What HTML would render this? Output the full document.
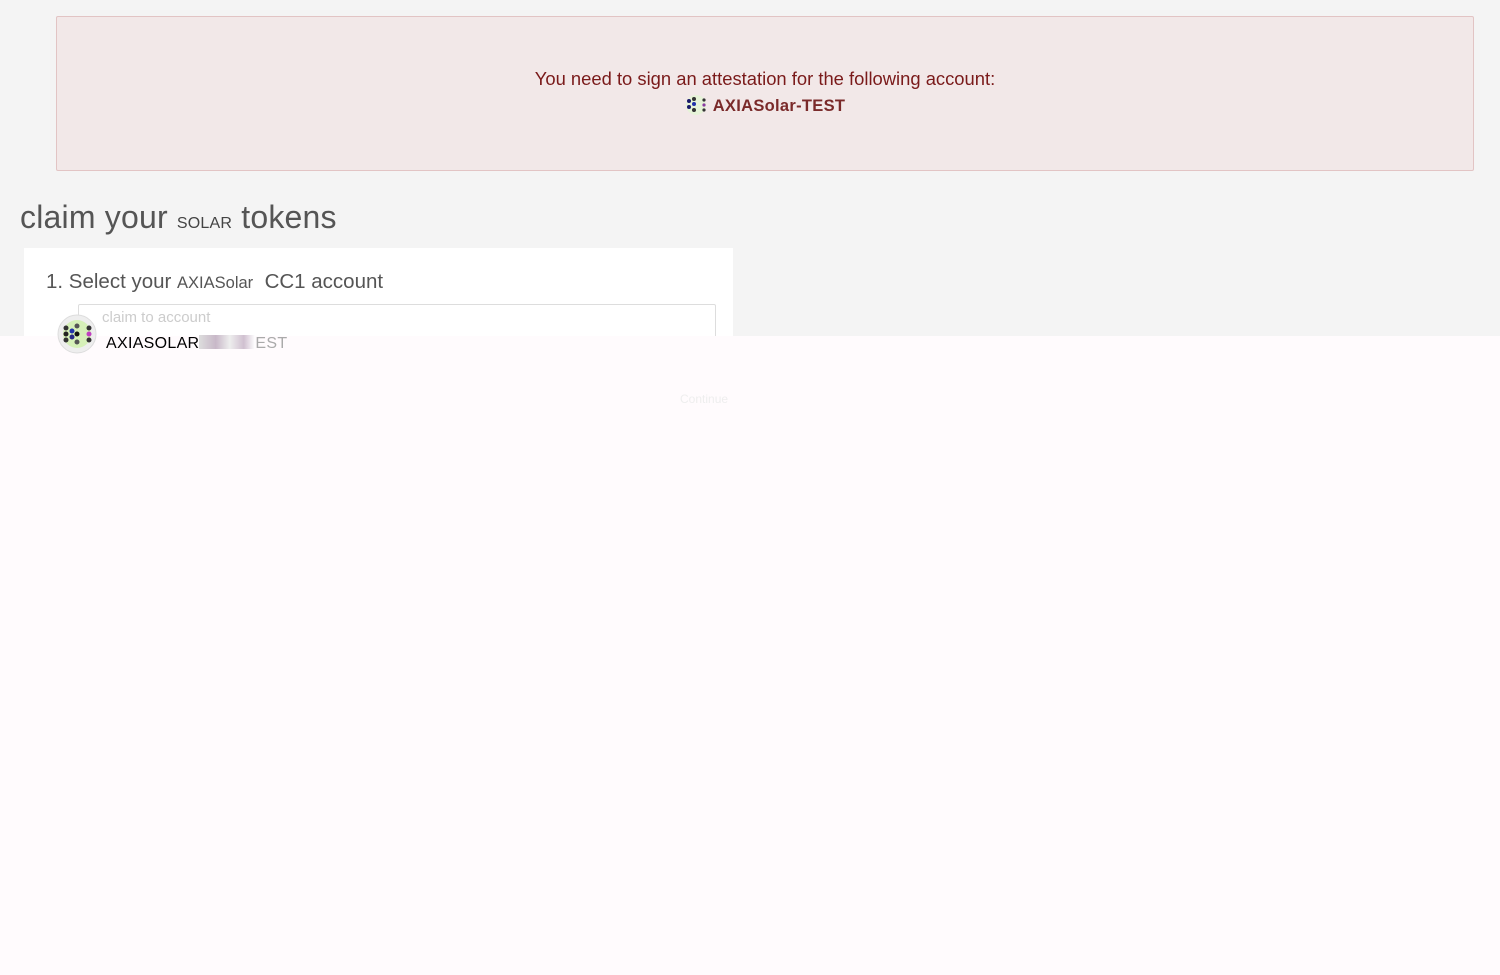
<!DOCTYPE html>
<html><head><meta charset="utf-8"><style>
body{margin:0;width:1500px;height:975px;background:#f4f4f4;font-family:"Liberation Sans",Arial,sans-serif;position:relative;overflow:hidden}
.alert{position:absolute;left:56px;top:16px;width:1416px;height:153px;background:#f2e8e8;border:1px solid #e2c4c4;border-radius:2px;color:#7a1a1a;text-align:center}
.alert .l1{position:absolute;top:51px;left:0;right:0;font-size:18.4px}
.alert .l2{position:absolute;top:78px;left:0;right:0;font-size:16.5px;font-weight:bold;color:#7a2a2a;letter-spacing:.3px}
h1{position:absolute;left:20px;top:199px;margin:0;font-weight:normal;font-size:32px;color:#555;letter-spacing:.2px}
h1 small{font-size:23px;font-variant:small-caps;color:#444}
.card{position:absolute;left:24px;top:248px;width:709px;height:120px;background:#fff}
.step{position:absolute;left:46px;top:270px;font-size:20.5px;color:#555}
.step span{font-size:16.5px;color:#555}
.input{position:absolute;left:78px;top:304px;width:636px;height:40px;border:1px solid #ddd;border-radius:2px;background:#fff}
.ph{position:absolute;left:102px;top:309px;font-size:15px;color:#ccc}
.overlay{position:absolute;left:0;top:336px;width:1500px;height:639px;background:#fffbfd}
.acct{position:absolute;left:106px;top:335px;font-size:16px;color:#000;letter-spacing:.3px}
.cont{position:absolute;left:680px;top:392px;font-size:12px;color:#eee}
</style></head><body>
<div class="alert">
<div class="l1">You need to sign an attestation for the following account:</div>
<div class="l2"><svg width="22" height="20" viewBox="0 0 22 20" style="vertical-align:-4px;margin-right:6px"><circle cx="11" cy="10" r="10" fill="#e6f3d8"/><g fill="#1a1a6a"><circle cx="4" cy="6" r="2"/><circle cx="4" cy="12" r="2"/><circle cx="9" cy="4" r="2" fill="#333"/><circle cx="9" cy="9" r="2" fill="#2233aa"/><circle cx="9" cy="15" r="2" fill="#333"/><circle cx="19" cy="5" r="1.6" fill="#333"/><circle cx="19" cy="10" r="1.6" fill="#8a3aa0"/><circle cx="19" cy="15" r="1.6" fill="#333"/></g></svg>AXIASolar-TEST</div>
</div>
<h1>claim your <small>solar</small> tokens</h1>
<div class="card"></div>
<div class="step">1. Select your <span>AXIASolar</span>&nbsp; CC1 account</div>
<div class="input"></div>
<div class="ph">claim to account</div>
<div class="overlay"></div>
<svg style="position:absolute;left:57px;top:314px" width="40" height="40" viewBox="0 0 40 40"><circle cx="20" cy="20" r="19" fill="#eee" stroke="#ddd"/><circle cx="20" cy="20" r="14" fill="#d6f0b8"/><g><circle cx="9" cy="14" r="2.5" fill="#333"/><circle cx="9" cy="20" r="2.5" fill="#222"/><circle cx="9" cy="26" r="2.5" fill="#333"/><circle cx="15" cy="17" r="2.5" fill="#2233aa"/><circle cx="15" cy="23" r="2.5" fill="#2a2a8a"/><circle cx="20" cy="12" r="2.5" fill="#555"/><circle cx="20" cy="20" r="2.5" fill="#111"/><circle cx="20" cy="28" r="2.5" fill="#555"/><circle cx="32" cy="14" r="2.5" fill="#333"/><circle cx="32" cy="20" r="2.5" fill="#c040c0"/><circle cx="32" cy="26" r="2.5" fill="#333"/></g></svg>
<div class="acct">AXIASOLAR<span style="display:inline-block;width:56px;height:14px;background:linear-gradient(90deg,#ddd,#c8b8c8 30%,#eee 55%,#d0c0d0 80%,#fff);vertical-align:-1px"></span><span style="color:#aaa">EST</span></div>
<div class="cont">Continue</div>
</body></html>
